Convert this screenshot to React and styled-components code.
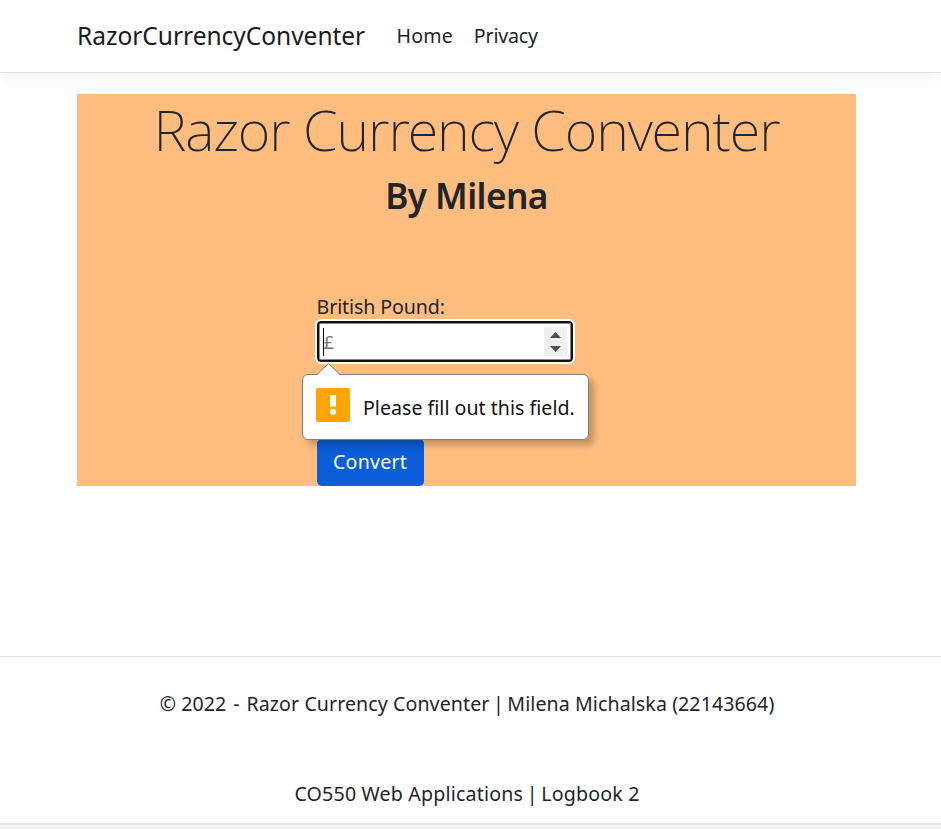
import React from "react";
import styled, { createGlobalStyle } from "styled-components";

const GlobalStyle = createGlobalStyle`
  * { box-sizing: border-box; }
  body {
    margin: 0;
    background: #fff;
    color: #212529;
    font-family: "Noto Sans", "Open Sans", sans-serif;
    font-size: 19.6px;
    font-weight: 400;
    line-height: 30px;
    letter-spacing: 0.08px;
    overflow: hidden;
  }
`;

const Page = styled.div`
  display: flex;
  flex-direction: column;
  height: 829px;
`;

const Navbar = styled.nav`
  display: flex;
  align-items: center;
  flex: none;
  height: 73px;
  padding: 0 77px;
  border-bottom: 1px solid #dee2e6;
  box-shadow: 0 5px 15px rgba(0, 0, 0, 0.05);
`;

const Brand = styled.a`
  width: 289px;
  margin-right: 20px;
  font-size: 24.5px;
  letter-spacing: -0.02px;
  color: #1a1a1a;
`;

const NavLink = styled.a`
  padding: 0 10.5px;
  letter-spacing: ${(p) => p.$tracking}px;
`;

const Main = styled.main`
  position: relative;
  display: flex;
  flex-direction: column;
  align-items: center;
  flex: none;
  width: 779px;
  height: 392px;
  margin: 21px 0 0 77px;
  background: #ffbd80;
`;

const Title = styled.h1`
  margin: 2px 0 0;
  font-size: 56px;
  font-weight: 230;
  line-height: 67px;
  letter-spacing: -1.1px;
`;

const Subtitle = styled.h2`
  margin: 11px 0 0;
  font-size: 35.2px;
  font-weight: 580;
  line-height: 43px;
  letter-spacing: -0.6px;
`;

const Form = styled.form`
  display: flex;
  flex-direction: column;
  align-items: flex-start;
  width: 258px;
  margin: 74px 0 0 -42px;
`;

const Label = styled.label`
  height: 30px;
  padding-top: 1px;
  letter-spacing: -0.1px;
`;

const Field = styled.div`
  display: flex;
  align-items: center;
  justify-content: space-between;
  width: 256px;
  height: 41px;
  padding: 0 6px;
  border: 2.5px solid #101010;
  border-radius: 4px;
  outline: 2px solid #fff;
  outline-offset: -0.5px;
  background: #fff;
  box-shadow: inset 0 0 0 1px #8a8a8a;
`;

const Placeholder = styled.span`
  display: flex;
  align-items: center;
  height: 28px;
  margin-left: -2px;
  border-left: 1px solid #000;
  color: #757575;
  font-size: 18.5px;
`;

const Spinner = styled.span`
  display: flex;
  margin-right: -2px;
  width: 23px;
  height: 30px;
  background: #f0f0f0;
`;

const Bubble = styled.div`
  position: absolute;
  left: 225px;
  top: 280px;
  display: flex;
  align-items: center;
  gap: 13px;
  width: 287px;
  height: 66px;
  padding: 0 13px;
  border: 1px solid #808080;
  border-radius: 6px;
  background: #fff;
  color: #101010;
  white-space: nowrap;
  box-shadow: 5px 5px 7px rgba(0, 0, 0, 0.24);
`;

const BubbleTip = styled.svg`
  position: absolute;
  left: 13px;
  top: -13px;
`;

const WarningIcon = styled.svg`
  flex: none;
  margin-top: -4px;
`;

const Message = styled.span`
  padding-top: 1px;
  letter-spacing: 0.01px;
`;

const ConvertButton = styled.button`
  width: 107px;
  height: 47px;
  margin-top: 77px;
  padding: 0 0 2px;
  border: 0;
  border-radius: 5px;
  background: #0b5ed7;
  color: #fff;
  font: inherit;
  letter-spacing: 0.2px;
`;

const Footer = styled.footer`
  display: flex;
  flex-direction: column;
  align-items: center;
  gap: 60px;
  flex: none;
  height: 167px;
  margin-top: 170px;
  padding: 32px 7px 0 0;
  border-top: 1px solid #dee2e6;
`;

const FooterLine = styled.div`
  white-space: nowrap;
  letter-spacing: ${(p) => p.$tracking}px;
`;

const Separator = styled.span`
  margin: 0 ${(p) => p.$space}px;
`;

const BottomEdge = styled.div`
  flex: none;
  height: 6px;
  border-top: 2px solid #e3e5e5;
  background: #f2f2f2;
`;

export default function App() {
  return (
    <Page>
      <GlobalStyle />
      <Navbar>
        <Brand>RazorCurrencyConventer</Brand>
        <NavLink $tracking={0.15}>Home</NavLink>
        <NavLink $tracking={-0.2}>Privacy</NavLink>
      </Navbar>
      <Main>
        <Title>Razor Currency Conventer</Title>
        <Subtitle>By Milena</Subtitle>
        <Form>
          <Label>British Pound:</Label>
          <Field>
            <Placeholder>£</Placeholder>
            <Spinner>
              <svg width="23" height="30" viewBox="0 0 23 30" fill="#505050">
                <path d="M6 11L11.5 5L17 11ZM6 19L11.5 25L17 19Z" />
              </svg>
            </Spinner>
          </Field>
          <ConvertButton type="button">Convert</ConvertButton>
        </Form>
        <Bubble>
          <BubbleTip width="26" height="14" viewBox="0 0 26 14">
            <path d="M1 13L12.5 1.5L24 13V14H1Z" fill="#fff" />
            <path d="M1 12.5L12.5 1.5L24 12.5" fill="none" stroke="#808080" />
          </BubbleTip>
          <WarningIcon width="34" height="34" viewBox="0 0 34 34">
            <rect width="34" height="34" rx="2" fill="#ffa500" />
            <rect x="14" y="7" width="6" height="11.5" fill="#fff" />
            <circle cx="17" cy="23.7" r="3" fill="#fff" />
          </WarningIcon>
          <Message>Please fill out this field.</Message>
        </Bubble>
      </Main>
      <Footer>
        <FooterLine $tracking={0.08}>
          © 2022 <Separator $space={1.7}>-</Separator> Razor Currency Conventer{" "}
          <Separator $space={-1.7}>|</Separator> Milena Michalska (22143664)
        </FooterLine>
        <FooterLine $tracking={0.18}>
          CO550 Web Applications <Separator $space={-1.7}>|</Separator> Logbook 2
        </FooterLine>
      </Footer>
      <BottomEdge />
    </Page>
  );
}
